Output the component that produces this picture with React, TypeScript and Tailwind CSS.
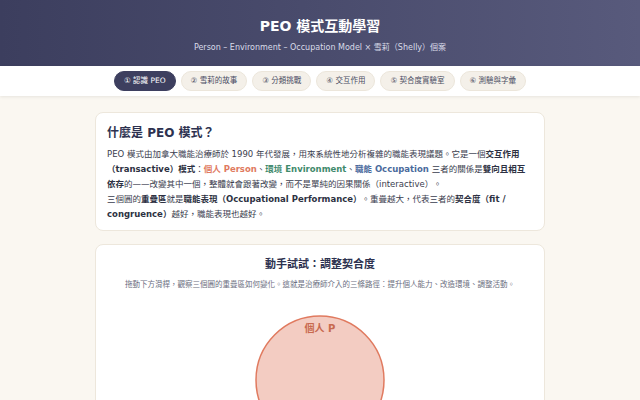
import React, { useState } from "react";

const tabs = [
  "① 認識 PEO",
  "② 雪莉的故事",
  "③ 分類挑戰",
  "④ 交互作用",
  "⑤ 契合度實驗室",
  "⑥ 測驗與字彙",
];

const font = {
  fontFamily: '"DejaVu Sans", "Noto Sans CJK TC", sans-serif',
};

function FitDiagram() {
  return (
    <svg width="320" height="180" viewBox="0 0 320 180" className="block mx-auto">
      <circle cx="160" cy="70" r="64" fill="#e07a5f" fillOpacity="0.38" stroke="#e07a5f" strokeWidth="1.5" />
      <text x="160" y="22" textAnchor="middle" fontSize="10" fontWeight="700" fill="#c8694f" style={font}>
        個人 P
      </text>
    </svg>
  );
}

export default function App() {
  const [active, setActive] = useState(0);

  return (
    <div className="min-h-screen bg-[#faf7f1] text-[#2d3142]" style={font}>
      <header className="h-[66px] bg-gradient-to-r from-[#3c3e5e] to-[#585a7c] flex flex-col items-center pt-[16px]">
        <h1 className="text-white font-bold text-[14px] leading-[20px]">PEO 模式互動學習</h1>
        <p className="text-[#d9dbe8] text-[8px] mt-[6px] leading-[12px]">
          Person – Environment – Occupation Model × 雪莉（Shelly）個案
        </p>
      </header>

      <nav className="h-[30px] bg-white flex items-center justify-center gap-[5px] shadow-[0_1px_3px_rgba(0,0,0,0.08)]">
        {tabs.map((t, i) => (
          <button
            key={t}
            onClick={() => setActive(i)}
            className={
              i === active
                ? "h-[20px] px-[9px] rounded-full text-[7.5px] bg-[#3d3f5f] text-white border border-[#3d3f5f]"
                : "h-[20px] px-[9px] rounded-full text-[7.5px] bg-[#f4f0e9] text-[#4a4d63] border border-[#ece6db]"
            }
          >
            {t}
          </button>
        ))}
      </nav>

      <main className="w-[450px] mx-auto pt-[16px] flex flex-col gap-[13px]">
        <section className="bg-white rounded-[8px] border border-[#ede7dc] px-[11px] pt-[11px] pb-[8px]">
          <h2 className="text-[12px] font-bold text-[#2d3250] leading-[18px]">什麼是 PEO 模式？</h2>
          <p className="mt-[5px] text-[8.5px] leading-[15px] text-[#3a3d4e]">
            PEO 模式由加拿大職能治療師於 1990 年代發展，用來系統性地分析複雜的職能表現議題。它是一個
            <b className="text-[#2d3142]">交互作用（transactive）模式</b>：
            <b className="text-[#e07a5f]">個人 Person</b>、
            <b className="text-[#3f8a6c]">環境 Environment</b>、
            <b className="text-[#4a6a9c]">職能 Occupation</b> 三者的關係是
            <b className="text-[#2d3142]">雙向且相互依存</b>的——改變其中一個，整體就會跟著改變，而不是單純的因果關係（interactive）。
            <br />
            三個圓的<b className="text-[#2d3142]">重疊區</b>就是
            <b className="text-[#2d3142]">職能表現（Occupational Performance）</b>。重疊越大，代表三者的
            <b className="text-[#2d3142]">契合度（fit / congruence）</b>越好，職能表現也越好。
          </p>
        </section>

        <section className="bg-white rounded-[8px] border border-[#ede7dc] pt-[12px] pb-[20px]">
          <h2 className="text-center text-[11px] font-bold text-[#2d3250] leading-[16px]">動手試試：調整契合度</h2>
          <p className="text-center text-[7.5px] text-[#6b6e80] mt-[6px] leading-[12px]">
            拖動下方滑桿，觀察三個圓的重疊區如何變化。這就是治療師介入的三條路徑：提升個人能力、改造環境、調整活動。
          </p>
          <div className="mt-[19px]">
            <FitDiagram />
          </div>
        </section>
      </main>
    </div>
  );
}
